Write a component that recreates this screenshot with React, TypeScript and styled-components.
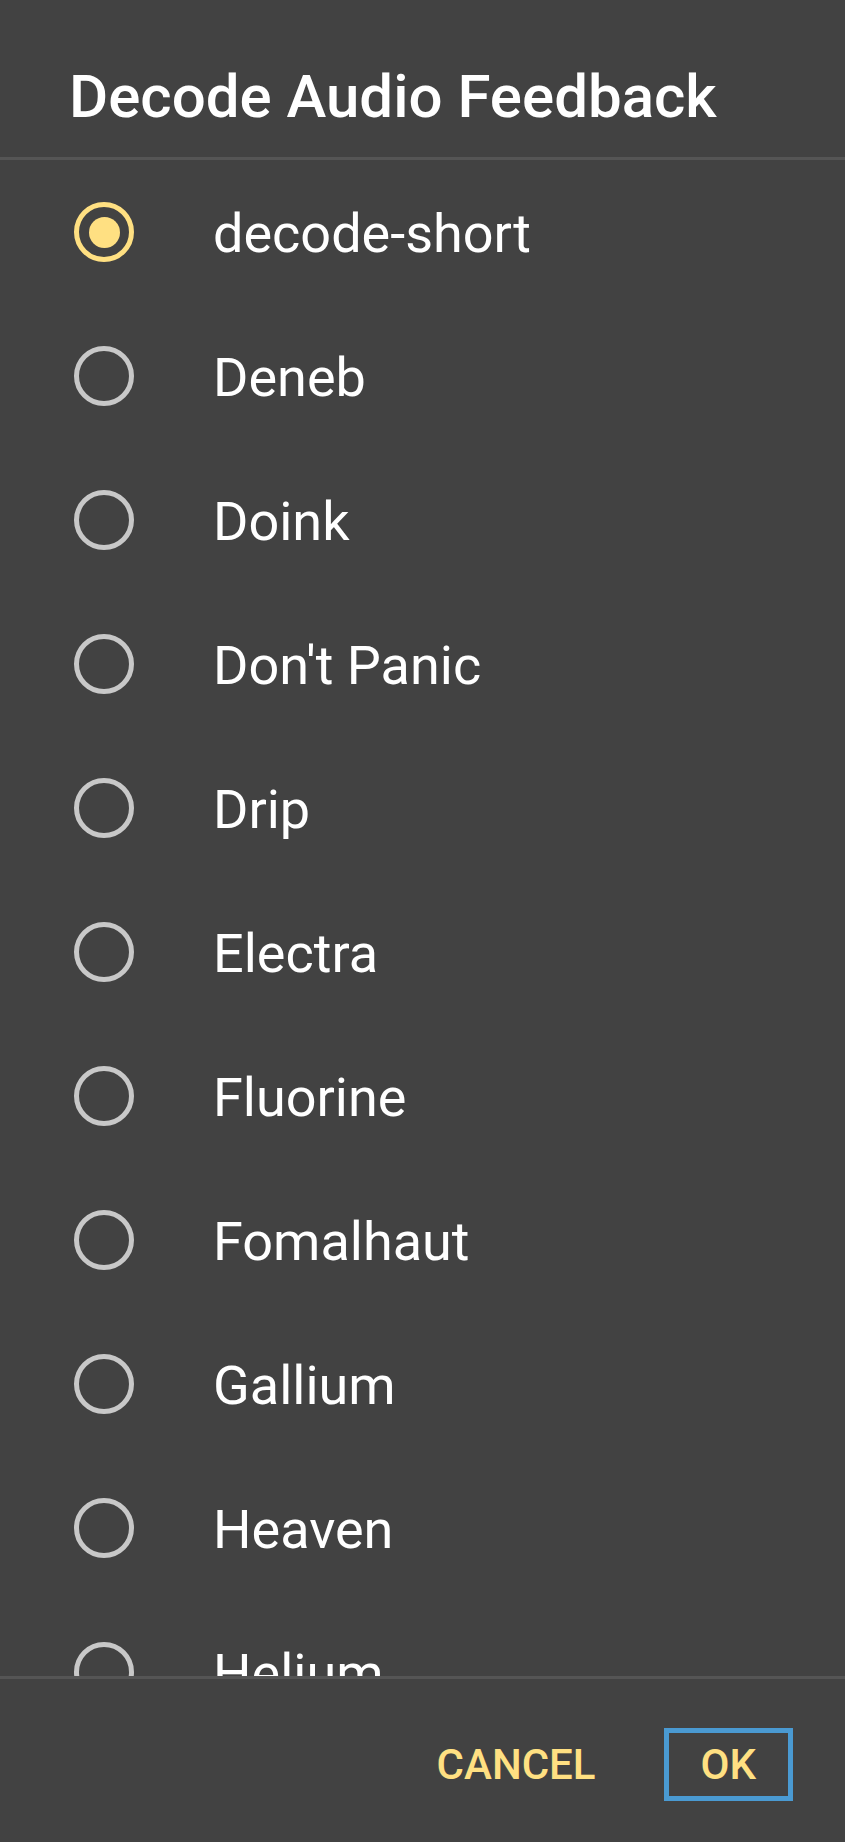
import React, { useState } from "react";
import styled, { createGlobalStyle } from "styled-components";

const tones = [
  "decode-short",
  "Deneb",
  "Doink",
  "Don't Panic",
  "Drip",
  "Electra",
  "Fluorine",
  "Fomalhaut",
  "Gallium",
  "Heaven",
  "Helium",
];

const GlobalStyle = createGlobalStyle`
  html, body {
    margin: 0;
    padding: 0;
    background: #424242;
  }
  * {
    box-sizing: border-box;
  }
`;

function App() {
  const [selected, setSelected] = useState(0);

  return (
    <>
      <GlobalStyle />
      <Dialog>
        <Header>
          <Title>Decode Audio Feedback</Title>
        </Header>
        <List>
          {tones.map((name, index) => (
            <Item key={name} onClick={() => setSelected(index)}>
              <Radio checked={index === selected} />
              <Label>{name}</Label>
            </Item>
          ))}
        </List>
        <Footer>
          <Button>CANCEL</Button>
          <Button focused>OK</Button>
        </Footer>
      </Dialog>
    </>
  );
}

export default App;

const Dialog = styled.div`
  width: 845px;
  height: 1842px;
  display: flex;
  flex-direction: column;
  background: #424242;
  font-family: Roboto, "Noto Sans", sans-serif;
  overflow: hidden;
`;

const Header = styled.div`
  flex: 0 0 auto;
  height: 160px;
  padding: 67px 0 0 69px;
  border-bottom: 3px solid #555555;
`;

const Title = styled.h1`
  margin: 0;
  font-size: 60px;
  line-height: 1;
  font-weight: 500;
  color: #ffffff;
`;

const List = styled.div`
  flex: 1 1 auto;
  min-height: 0;
  overflow: hidden;
`;

const Item = styled.div`
  height: 144px;
  display: flex;
  align-items: center;
  gap: 79px;
  padding: 0 0 0 74px;
  cursor: pointer;
`;

const Radio = styled.span<{ checked: boolean }>`
  flex: 0 0 auto;
  width: 60px;
  height: 60px;
  border-radius: 50%;
  border: 5px solid ${({ checked }) => (checked ? "#ffe082" : "#c8c8c8")};
  display: flex;
  align-items: center;
  justify-content: center;

  &::after {
    content: "";
    width: 31px;
    height: 31px;
    border-radius: 50%;
    background: #ffe082;
    display: ${({ checked }) => (checked ? "block" : "none")};
  }
`;

const Label = styled.span`
  font-size: 54px;
  line-height: 1;
  padding-top: 3px;
  color: #ffffff;
  white-space: nowrap;
`;

const Footer = styled.div`
  flex: 0 0 auto;
  height: 166px;
  border-top: 3px solid #555555;
  display: flex;
  justify-content: flex-end;
  align-items: center;
  gap: 31px;
  padding: 8px 52px 0 0;
`;

const Button = styled.button<{ focused?: boolean }>`
  height: 73px;
  padding: 0 32px;
  border: 5px solid ${({ focused }) => (focused ? "#4a9ad2" : "transparent")};
  background: transparent;
  color: #ffe082;
  font-family: Roboto, "Noto Sans", sans-serif;
  font-size: 42px;
  font-weight: 500;
  line-height: 1;
  cursor: pointer;
`;
